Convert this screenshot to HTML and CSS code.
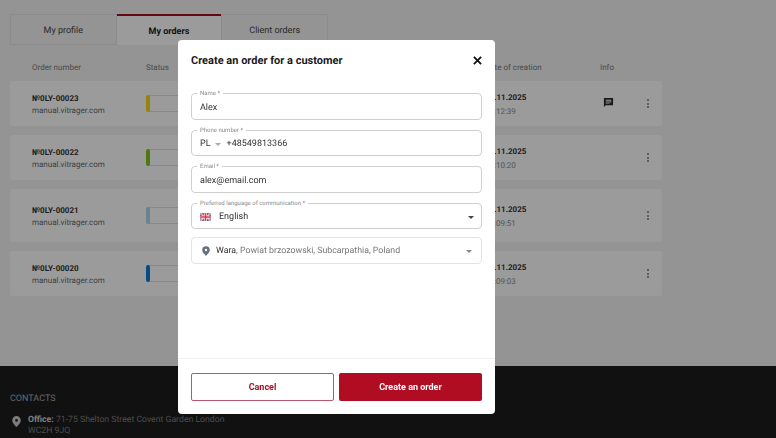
FILE: index.html
```html
<!DOCTYPE html>
<html lang="en">
<head>
    <meta charset="UTF-8">
    <meta name="viewport" content="width=device-width, initial-scale=1.0">
    <title>My orders</title>
    <link rel="stylesheet" href="styles.css">
</head>

<body>
    <main class="page">
        <nav class="tabs">
            <a class="tab">My profile</a>
            <a class="tab tab-active">My orders</a>
            <a class="tab">Client orders</a>
        </nav>

        <div class="table-head">
            <span>Order number</span>
            <span>Status</span>
            <span>Date of creation</span>
            <span>Info</span>
        </div>

        <div class="order">
            <div><b class="num">№0LY-00023</b><span class="site">manual.vitrager.com</span></div>
            <div class="status"><i class="mark mark-yellow"></i></div>
            <div><b class="date">12.11.2025</b><span class="time">10:12:39</span></div>
            <div class="info">
                <svg width="11" height="11" viewBox="0 0 24 24"><path fill="#2b2b2b" d="M2 2h20v16H6l-4 4zM6 6v2h12V6zM6 10v2h12v-2zM6 14v1h8v-1z"/></svg>
            </div>
            <div class="dots"><i></i><i></i><i></i></div>
        </div>

        <div class="order">
            <div><b class="num">№0LY-00022</b><span class="site">manual.vitrager.com</span></div>
            <div class="status"><i class="mark mark-green"></i></div>
            <div><b class="date">12.11.2025</b><span class="time">10:10:20</span></div>
            <div class="info"></div>
            <div class="dots"><i></i><i></i><i></i></div>
        </div>

        <div class="order order-tall">
            <div><b class="num">№0LY-00021</b><span class="site">manual.vitrager.com</span></div>
            <div class="status"><i class="mark mark-sky"></i><span class="status-text">In</span></div>
            <div><b class="date">12.11.2025</b><span class="time">10:09:51</span></div>
            <div class="info"></div>
            <div class="dots"><i></i><i></i><i></i></div>
        </div>

        <div class="order">
            <div><b class="num">№0LY-00020</b><span class="site">manual.vitrager.com</span></div>
            <div class="status"><i class="mark mark-blue"></i><span class="status-text">In</span></div>
            <div><b class="date">12.11.2025</b><span class="time">10:09:03</span></div>
            <div class="info"></div>
            <div class="dots"><i></i><i></i><i></i></div>
        </div>
    </main>

    <footer class="footer">
        <h4>CONTACTS</h4>
        <div class="office">
            <svg width="9" height="11" viewBox="0 0 20 24"><path fill="#c9c9c9" fill-rule="evenodd" d="M10 0a9.5 9.5 0 0 0-9.500 9.500C.5 15.500 10 24 10 24s9.500-8.500 9.500-14.500A9.500 9.500 0 0 0 10 0zm0 6.500a3 3 0 1 1 0 6 3 3 0 0 1 0-6z"/></svg>
            <p><b>Office:</b> 71-75 Shelton Street Covent Garden London WC2H 9JQ</p>
        </div>
    </footer>

    <div class="overlay"></div>

    <section class="modal">
        <div class="modal-head">
            <h2>Create an order for a customer</h2>
            <svg class="close" width="9" height="9" viewBox="0 0 10 10"><path stroke="#111" stroke-width="2" d="M1 1l8 8M9 1L1 9"/></svg>
        </div>

        <div class="fields">
            <div class="field">
                <label>Name *</label>
                <span>Alex</span>
            </div>
            <div class="field">
                <label>Phone number *</label>
                <span>PL</span>
                <i class="caret caret-light"></i>
                <span class="phone">+48549813366</span>
            </div>
            <div class="field">
                <label>Email *</label>
                <span>alex@email.com</span>
            </div>
            <div class="field">
                <label>Preferred language of communication *</label>
                <svg class="flag" width="11" height="8" viewBox="0 0 60 40">
                    <rect width="60" height="40" rx="8" fill="#3a3f78"/>
                    <path stroke="#fff" stroke-width="9" d="M0 0l60 40M60 0L0 40"/>
                    <path stroke="#d6404f" stroke-width="4" d="M0 0l60 40M60 0L0 40"/>
                    <path stroke="#fff" stroke-width="15" d="M30 0v40M0 20h60"/>
                    <path stroke="#d6404f" stroke-width="9" d="M30 0v40M0 20h60"/>
                </svg>
                <span class="lang">English</span>
                <i class="caret"></i>
            </div>
            <div class="field field-place">
                <svg width="8" height="10" viewBox="0 0 20 24"><path fill="#667085" fill-rule="evenodd" d="M10 0a9.500 9.500 0 0 0-9.500 9.500C.5 15.500 10 24 10 24s9.500-8.500 9.500-14.500A9.500 9.500 0 0 0 10 0zm0 6.500a3 3 0 1 1 0 6 3 3 0 0 1 0-6z"/></svg>
                <span class="place"><em>Wara</em>, Powiat brzozowski, Subcarpathia, Poland</span>
                <i class="caret caret-grey"></i>
            </div>
        </div>

        <div class="modal-foot">
            <button class="btn btn-cancel">Cancel</button>
            <button class="btn btn-create">Create an order</button>
        </div>
    </section>
</body>
</html>
```

FILE: styles.css
```css
* {
  box-sizing: border-box;
}

body {
  margin: 0;
  height: 438px;
  overflow: hidden;
  background-color: #f4f4f4;
  font-family: Roboto, "Liberation Sans", sans-serif;
  text-rendering: geometricPrecision;
  color: #222;
}

.page {
  height: 366px;
  padding: 14px 0 0 10px;
  background-color: #efefef;
}

/* Tabs */
.tabs {
  display: flex;
  width: 318px;
  height: 31px;
}

.tab {
  flex: 1;
  display: flex;
  align-items: center;
  justify-content: center;
  padding-top: 2px;
  font-size: 9px;
  color: #444;
  border: 1px solid #e0e0e0;
}

.tab-active {
  font-weight: 700;
  color: #222;
  background-color: #fafafa;
  border: none;
  border-top: 2px solid #a50a20;
}

/* Orders table */
.table-head,
.order {
  display: grid;
  grid-template-columns: 114px 339px 115px 42px 12px;
  width: 652px;
  padding-left: 22px;
}

.table-head {
  height: 36px;
  padding-top: 9px;
  align-items: center;
  font-size: 8px;
  color: #777;
}

.order {
  height: 45px;
  margin-bottom: 9px;
  padding-top: 2px;
  align-items: center;
  background-color: #fbfbfb;
  border-radius: 3px;
}

.order-tall {
  height: 53px;
}

.num,
.site,
.date,
.time {
  display: block;
  font-size: 8px;
  line-height: 12px;
}

.num,
.date {
  font-weight: 700;
  color: #333;
}

.site {
  color: #666;
}

.time {
  margin-top: 2px;
  color: #888;
}

.status {
  position: relative;
  width: 120px;
  height: 16.500px;
  margin-top: -2px;
  border: 1px solid #ddd;
  border-radius: 2px;
  text-align: center;
}

.status-text {
  font-size: 8px;
  font-weight: 700;
  line-height: 15px;
  color: #444;
}

.mark {
  position: absolute;
  left: -1px;
  top: -1px;
  bottom: -1px;
  width: 3.500px;
  border-radius: 2px;
}

.mark-yellow {
  background-color: #f5d416;
}

.mark-green {
  background-color: #7fc31c;
}

.mark-sky {
  background-color: #a9d3ea;
}

.mark-blue {
  background-color: #0b79d0;
}

.info {
  display: flex;
  padding-left: 3px;
  margin-top: -5px;
}

.dots {
  display: flex;
  flex-direction: column;
  gap: 1.500px;
  align-items: center;
  margin-top: -2px;
}

.dots i {
  width: 2px;
  height: 2px;
  border-radius: 50%;
  background-color: #777;
}

/* Footer */
.footer {
  height: 72px;
  padding: 28px 10px 0;
  background-color: #1c1c1c;
  color: #7d7d7d;
}

.footer h4 {
  margin: 0 0 10px;
  font-size: 9px;
  font-weight: 400;
  line-height: 11px;
  color: #a9a9a9;
}

.office {
  display: flex;
  gap: 7px;
  padding-left: 2px;
  align-items: flex-start;
}

.office svg {
  margin-top: 1px;
}

.office p {
  width: 215px;
  margin: 0;
  font-size: 8.700px;
  line-height: 10.500px;
}

.office b {
  color: #ccc;
  font-weight: 700;
}

/* Modal */
.overlay {
  position: fixed;
  top: 0;
  right: 0;
  bottom: 0;
  left: 0;
  background-color: rgba(0, 0, 0, 0.38);
}

.modal {
  position: fixed;
  top: 40px;
  left: 178px;
  display: flex;
  flex-direction: column;
  width: 317px;
  height: 374px;
  background-color: #fff;
  border-radius: 4px;
}

.modal-head {
  display: flex;
  align-items: center;
  justify-content: space-between;
  height: 40px;
  padding: 0 13px;
}

.modal-head h2 {
  margin: 0;
  font-size: 11px;
  font-weight: 700;
  color: #1a1a1a;
}

.fields {
  display: flex;
  flex-direction: column;
  gap: 10px;
  flex: 1;
  padding: 13px 13px 0;
}

.field {
  position: relative;
  display: flex;
  align-items: center;
  height: 26.500px;
  padding: 3px 8px 0;
  border: 1px solid #cfcfcf;
  border-radius: 4px;
  font-size: 9px;
  color: #333;
}

.field label {
  position: absolute;
  left: 5px;
  top: -4px;
  padding: 0 3px;
  font-size: 6px;
  line-height: 7px;
  color: #8a8a8a;
  background-color: #fff;
}

.field .phone {
  margin-left: 6px;
}

.field .lang {
  margin-left: 8px;
}

.field-place {
  margin-top: -2px;
  padding: 2px 8px 0 10px;
  border-color: #e3e3e3;
}

.place {
  margin-left: 6px;
  font-size: 8.800px;
  color: #777;
}

.place em {
  font-style: normal;
  color: #333;
}

.caret {
  width: 0;
  height: 0;
  margin-left: auto;
  margin-right: -1px;
  border-left: 3px solid transparent;
  border-right: 3px solid transparent;
  border-top: 3px solid #444;
}

.caret-light {
  margin-left: 4px;
  margin-right: 0;
  border-top-color: #aaa;
}

.caret-grey {
  margin-right: 1px;
  border-top-color: #888;
}

.modal-foot {
  display: flex;
  gap: 5px;
  height: 56px;
  padding: 14px 13px 0;
  border-top: 1px solid #f2f2f2;
}

.btn {
  height: 27.500px;
  border-radius: 2px;
  font-family: inherit;
  font-size: 9px;
  font-weight: 700;
}

.btn-cancel {
  width: 143px;
  color: #a90f26;
  background-color: #fff;
  border: 1px solid #b8566a;
}

.btn-create {
  flex: 1;
  color: #fff;
  background-color: #b00d23;
  border: none;
}
```
